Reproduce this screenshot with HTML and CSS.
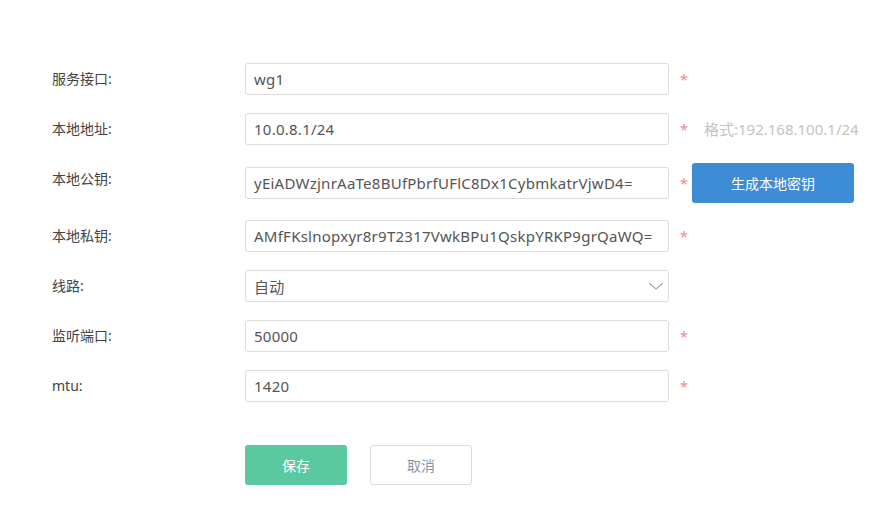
FILE: index.html
```html
<!DOCTYPE html>
<html lang="zh">
<head>
<meta charset="utf-8">
<link rel="stylesheet" href="styles.css">
</head>
<body>
<form class="form">
  <div class="row">
    <label class="label">服务接口:</label>
    <input class="input" value="wg1">
    <span class="star">*</span>
  </div>
  <div class="row">
    <label class="label">本地地址:</label>
    <input class="input" value="10.0.8.1/24">
    <span class="star">*</span>
    <span class="hint">格式:192.168.100.1/24</span>
  </div>
  <div class="row row-tall">
    <label class="label">本地公钥:</label>
    <input class="input" value="yEiADWzjnrAaTe8BUfPbrfUFlC8Dx1CybmkatrVjwD4=">
    <span class="star">*</span>
    <button type="button" class="btn btn-blue">生成本地密钥</button>
  </div>
  <div class="row">
    <label class="label">本地私钥:</label>
    <input class="input" value="AMfFKslnopxyr8r9T2317VwkBPu1QskpYRKP9grQaWQ=">
    <span class="star">*</span>
  </div>
  <div class="row">
    <label class="label">线路:</label>
    <div class="input select">
      <span>自动</span>
      <svg class="chev" width="16" height="8" viewBox="0 0 16 8"><path d="M1 1 L8 7 L15 1" fill="none" stroke="#a8a8a8" stroke-width="1.1"/></svg>
    </div>
  </div>
  <div class="row">
    <label class="label">监听端口:</label>
    <input class="input" value="50000">
    <span class="star">*</span>
  </div>
  <div class="row">
    <label class="label">mtu:</label>
    <input class="input" value="1420">
    <span class="star">*</span>
  </div>
  <div class="actions">
    <button type="button" class="btn btn-green">保存</button>
    <button type="button" class="btn btn-plain">取消</button>
  </div>
</form>
</body>
</html>
```
FILE: styles.css
```css
* { box-sizing: border-box; }
html, body { margin: 0; background: #fff; }
body {
  font-family: "Noto Sans", "Noto Sans CJK SC", sans-serif;
  font-size: 14px;
  color: #444;
}
.form {
  padding: 63px 0 0 52px;
  display: flex;
  flex-direction: column;
}
.row {
  display: flex;
  align-items: flex-start;
  height: 32px;
  margin-bottom: 18px;
}
.row-tall {
  height: 40px;
  align-items: center;
  margin-bottom: 17px;
}
.label {
  flex: none;
  width: 193px;
  line-height: 32px;
  color: #444;
  font-size: 14px;
}
.row-tall .label { align-self: flex-start; }
.input {
  flex: none;
  display: flex;
  align-items: center;
  width: 424px;
  height: 32px;
  margin: 0;
  border: 1px solid #dcdcdc;
  border-radius: 3px;
  padding: 0 8px;
  font-family: "Noto Sans", "Noto Sans CJK SC", sans-serif;
  font-size: 15px;
  letter-spacing: 0.25px;
  color: #555;
  background: #fff;
  outline: none;
}
.select {
  justify-content: space-between;
  padding-right: 4px;
}
.select span { font-size: 15px; }
.chev { display: block; }
.star {
  flex: none;
  margin-left: 11px;
  width: 12px;
  line-height: 34px;
  color: #f08a8a;
  font-size: 14px;
}
.row-tall .star { align-self: flex-start; margin-top: 4px; }
.hint {
  margin-left: 12px;
  line-height: 32px;
  color: #c3c3c3;
  font-size: 15px;
}
.btn {
  font-family: "Noto Sans CJK SC", "Noto Sans", sans-serif;
  font-size: 14px;
  height: 40px;
  border-radius: 3px;
  cursor: pointer;
}
.btn-blue {
  flex: none;
  width: 162px;
  background: #3d8cd6;
  border: none;
  color: #fff;
}
.actions {
  display: flex;
  gap: 23px;
  margin-left: 193px;
  margin-top: 25px;
}
.btn-green {
  width: 102px;
  background: #5ac99f;
  border: none;
  color: #fff;
}
.btn-plain {
  width: 102px;
  background: #fff;
  border: 1px solid #dcdcdc;
  color: #8794a8;
}
```
